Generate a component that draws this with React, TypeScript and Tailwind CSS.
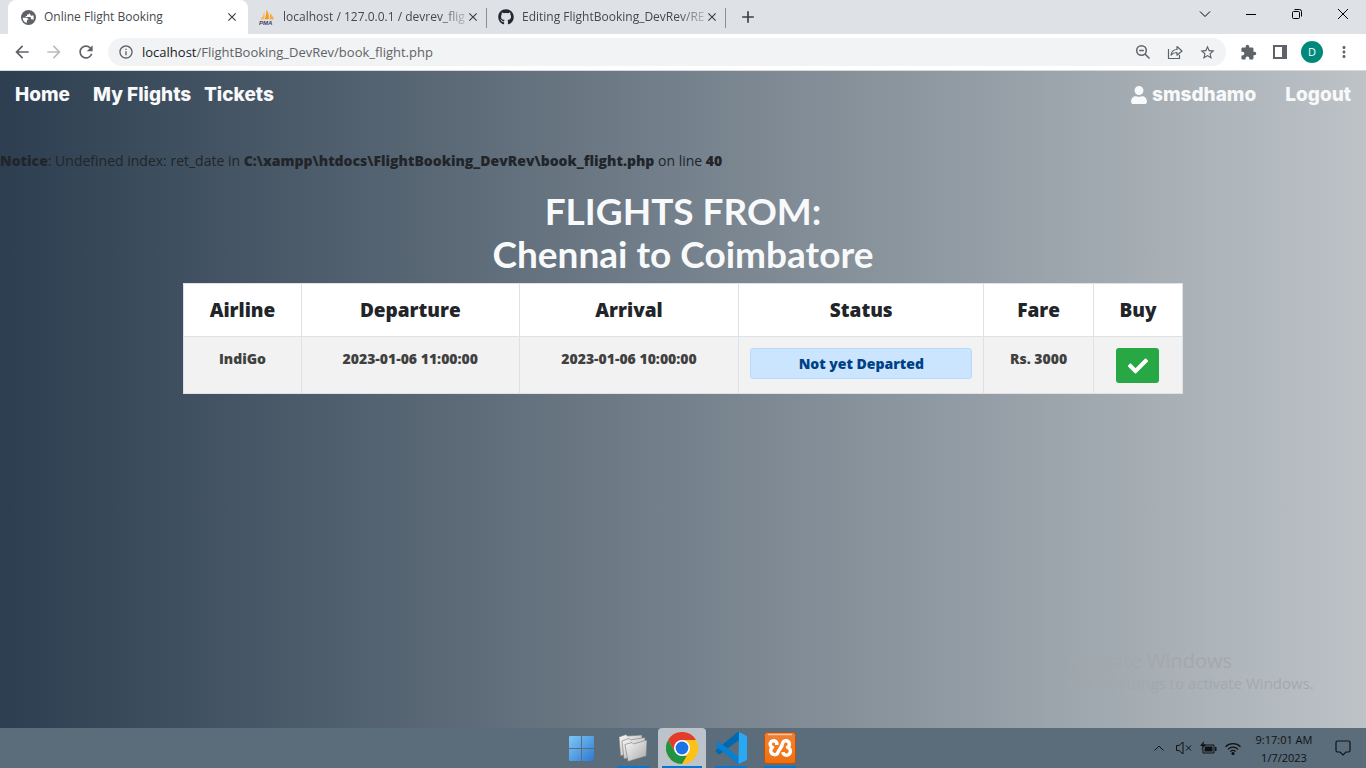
import React from "react";
import { FaCheck, FaGithub, FaUser } from "react-icons/fa";
import { MdArrowBack, MdArrowForward, MdClose, MdAdd, MdExtension, MdMoreVert, MdOutlineInfo, MdRefresh, MdStarBorder } from "react-icons/md";

const sans = "font-['Open_Sans','Noto_Sans',sans-serif]";

function PmaIcon() {
  return (
    <svg width="16" height="16" viewBox="0 0 16 16" aria-hidden="true">
      <path d="M1.2 10.5C3 9 4.6 6 5.2 2.6c.6 2.6.5 5.400-.2 7.600z" fill="#fbb468" />
      <path d="M5.400 10.300C7 7.500 7.600 4 7.400.8c2 2.600 2.800 6 2.400 9.400z" fill="#f89c0e" />
      <path d="M10.400 10.200c.8-2.200.8-4.400.2-6.200 2 1.600 3.600 3.800 4.400 6.400z" fill="#f9a94a" />
      <text x="0" y="15.600" fontSize="6" fontWeight="700" fontStyle="italic" fontFamily="Liberation Sans, sans-serif" fill="#3d3e63">PMA</text>
    </svg>
  );
}

function GlobeIcon() {
  return (
    <svg width="15" height="15" viewBox="0 0 16 16" aria-hidden="true">
      <circle cx="8" cy="8" r="8" fill="#5f6368" />
      <path d="M1.800 8.300h3.700c1.600 0 2.400.8 2.400 2.200H6.400v1.700c0 .6-.3 1.200-.9 1.600C3.300 12.900 1.800 10.800 1.800 8.300zM9.200 2v1.300c0 1-.7 1.500-1.600 1.500H6.400v1.500H5v1.200h4.200c.9 0 1.400.5 1.400 1.400v1h1.300c.7 0 1.200.4 1.400.9a6.300 6.300 0 0 0-.4-5.400c-.6.7-1.500.9-2.300.4-.8-.6-1.600-2.300-1.400-3.800z" fill="#fff" />
    </svg>
  );
}

function Tab({ title, icon, active = false }: { title: string; icon: React.ReactNode; active?: boolean }) {
  return (
    <div className={active
      ? "relative flex w-[240px] items-center rounded-t-lg bg-white pr-2 pl-3"
      : "relative flex w-[239px] items-center pr-2 pl-[11px]"}>
      <span className="flex w-4 shrink-0 justify-center">{icon}</span>
      <span className={active
        ? "ml-2 flex-1 text-xs whitespace-nowrap text-[#45494d]"
        : "ml-2 flex-1 [mask-image:linear-gradient(to_right,#000_86%,rgb(0_0_0/0.25))] text-xs whitespace-nowrap text-[#45494d]"}>{title}</span>
      <button aria-label={"Close " + title} className="flex size-4 shrink-0 items-center justify-center text-[#3c4043]"><MdClose size={14} /></button>
      {!active && <span className="absolute top-2 right-0 h-5 w-px bg-[#8b8e92]" />}
    </div>
  );
}

function Browser() {
  return (
    <header className="border-b border-[#d5d8dc]">
      <div className="flex h-[34px] items-stretch bg-[#dee1e6] pl-2">
        <Tab active title="Online Flight Booking" icon={<GlobeIcon />} />
        <Tab title="localhost / 127.0.0.1 / devrev_flig" icon={<PmaIcon />} />
        <Tab title="Editing FlightBooking_DevRev/RE" icon={<FaGithub size={16} className="text-[#24292f]" />} />
        <button aria-label="New tab" className="px-3 text-[#3c4043]"><MdAdd size={20} /></button>
        <div className="ml-auto flex text-black">
          <button aria-label="Search tabs" className="flex h-7 w-[46px] items-center justify-center">
            <svg width="12" height="12" viewBox="0 0 12 12" fill="none" stroke="currentColor"><path d="M1 3.500 6 8.500l5-5" /></svg>
          </button>
          <button aria-label="Minimize" className="flex h-7 w-[46px] items-center justify-center">
            <svg width="12" height="12" viewBox="0 0 12 12" fill="none" stroke="currentColor"><path d="M1 6.500h10" /></svg>
          </button>
          <button aria-label="Restore" className="flex h-7 w-[46px] items-center justify-center">
            <svg width="12" height="12" viewBox="0 0 12 12" fill="none" stroke="currentColor"><rect x="1.500" y="3.500" width="7" height="7" rx="1" /><path d="M3.500 1.500h5a2 2 0 0 1 2 2v5" /></svg>
          </button>
          <button aria-label="Close window" className="flex h-7 w-[46px] items-center justify-center">
            <svg width="12" height="12" viewBox="0 0 12 12" fill="none" stroke="currentColor"><path d="m1 1 10 10M11 1 1 11" /></svg>
          </button>
        </div>
      </div>
      <div className="flex h-9 items-center bg-white pr-[6px] pl-3 text-[#5f6368]">
        <button aria-label="Back" className="w-8"><MdArrowBack size={20} /></button>
        <button aria-label="Forward" className="w-8 text-[#babcbe]"><MdArrowForward size={20} /></button>
        <button aria-label="Reload" className="w-8"><MdRefresh size={20} /></button>
        <div className="flex h-7 flex-1 items-center rounded-full bg-[#f1f3f4] pr-[10px] pl-[10px]">
          <MdOutlineInfo size={16} className="shrink-0" />
          <a href="#" className="ml-2 flex-1 pt-px text-[13px] text-[#5f6368]"><span className="text-[#202124]">localhost</span>/FlightBooking_DevRev/book_flight.php</a>
          <div className="flex items-center gap-4">
            <button aria-label="Zoom">
              <svg width="16" height="16" viewBox="0 0 16 16" fill="none" stroke="currentColor" strokeWidth="1.500"><circle cx="6.500" cy="6.500" r="4.800" /><path d="m10 10 4.500 4.500M4.200 6.500h4.600" /></svg>
            </button>
            <button aria-label="Share">
              <svg width="16" height="16" viewBox="0 0 16 16" fill="none" stroke="currentColor" strokeWidth="1.200" strokeLinejoin="round"><path d="M1.500 5v9.500h11V11M4 11c.6-3.600 2.800-5.400 6-5.500V2.500l5 4.500-5 4.200V8.500C7.400 8.500 5.600 9.200 4 11z" /></svg>
            </button>
            <button aria-label="Bookmark"><MdStarBorder size={17} /></button>
          </div>
        </div>
        <div className="flex items-center">
          <button aria-label="Extensions" className="flex w-[38px] justify-center pl-[6px]"><MdExtension size={17} /></button>
          <button aria-label="Side panel" className="flex w-8 justify-center">
            <svg width="14" height="14" viewBox="0 0 14 14"><path fill="currentColor" fillRule="evenodd" d="M0 0h14v14H0zM2 2h7v10H2z" /></svg>
          </button>
          <button aria-label="Profile" className="mx-[5px] size-[22px] rounded-full bg-[#00897b] text-[11px] text-white">D</button>
          <button aria-label="Menu" className="flex w-8 justify-center"><MdMoreVert size={18} /></button>
        </div>
      </div>
    </header>
  );
}

function Chrome() {
  return (
    <svg width="32" height="32" viewBox="-16 -16 32 32" aria-hidden="true">
      <circle r="16" fill="#fbc116" />
      <path d="M0-8H13.900A16 16 0 0 0-13.860-8L-6.900 4Z" fill="#e33b2e" />
      <path d="M-13.860-8-6.930 4 0 8h6.930L0 16A16 16 0 0 1-13.860-8Z" fill="#229342" />
      <path d="M6.930 4 0 16A16 16 0 0 0 13.860-8H0Z" fill="#fbc116" />
      <circle r="8" fill="#fff" />
      <circle r="6.400" fill="#1a73e8" />
    </svg>
  );
}

function Taskbar() {
  return (
    <footer className="flex h-10 shrink-0 items-center bg-[#5b6c7a] pr-[15px]">
      <div className="flex-1" />
      <div className="flex h-full gap-px pl-[10px]">
        <button aria-label="Start" className="flex w-12 items-center justify-center">
          <svg width="25" height="25" viewBox="0 0 25 25">
            <defs><linearGradient id="win" x2="1" y2="1"><stop stopColor="#7cc8f7" /><stop offset="1" stopColor="#2f78d0" /></linearGradient></defs>
            <path fill="url(#win)" d="M1 0h11v12H0V1a1 1 0 0 1 1-1zM13 0h11a1 1 0 0 1 1 1v11H13zM0 13h12v12H1a1 1 0 0 1-1-1zM13 13h12v11a1 1 0 0 1-1 1H13z" />
          </svg>
        </button>
        <button aria-label="Files" className="relative ml-[3px] flex w-12 items-center justify-center">
          <svg width="28" height="28" viewBox="0 0 28 28">
            <defs><linearGradient id="fold" x2="1" y2="1"><stop stopColor="#fafafa" /><stop offset="1" stopColor="#a8a8a8" /></linearGradient></defs>
            <g fill="url(#fold)" stroke="#777" strokeWidth=".6" strokeLinejoin="round">
              <path d="M0 3 7 .5l1.500 1.600L23 1v15L1.500 22z" />
              <path d="m3 7 7-2.500L11.500 6 26 3.500v16L5 25z" />
              <path d="m6 10.500 7-2L14.500 10 28 6l-.8 16L9 27.500z" />
            </g>
          </svg>
          <span className="absolute bottom-0 h-0.5 w-8 bg-[#0078d4]" />
        </button>
        <button aria-label="Google Chrome" className="relative flex w-12 items-center justify-center rounded-t-sm bg-[#bcc3ca]">
          <Chrome /><span className="absolute bottom-0 h-0.5 w-10 bg-[#0078d4]" />
        </button>
        <button aria-label="Visual Studio Code" className="relative flex w-12 items-center justify-center">
          <svg width="32" height="32" viewBox="0 0 32 32">
            <path d="M24 0v8L5 21.900a1.400 1.400 0 0 1-1.800 0L1 19.900a1.400 1.400 0 0 1 0-2L21.500.9A3.500 3.500 0 0 1 24 0z" fill="#0069b0" />
            <path d="M.9 12.400 3.200 10.700a1.400 1.400 0 0 1 1.800 0L24 25v7a3.500 3.500 0 0 1-2.500-1L1 14.300a1.400 1.400 0 0 1-.1-1.900z" fill="#0a7fcf" />
            <path d="M24 0 31 3.500a2 2 0 0 1 1 1.800v21.400a2 2 0 0 1-1 1.800L23.500 32z" fill="#29a8f3" />
          </svg>
          <span className="absolute bottom-0 h-0.5 w-8 bg-[#0078d4]" />
        </button>
        <button aria-label="XAMPP" className="relative flex w-12 items-center justify-center">
          <svg width="32" height="32" viewBox="0 0 32 32">
            <defs><linearGradient id="xa" x2="0" y2="1"><stop stopColor="#e8803f" /><stop offset=".4" stopColor="#f47c20" /><stop offset="1" stopColor="#ee6f12" /></linearGradient></defs>
            <rect x=".5" y=".5" width="31" height="31" rx="2.500" fill="url(#xa)" stroke="#b95410" />
            <path d="M4 2.500h24" stroke="#f4c3a0" strokeWidth="1.500" />
            <path d="M12.800 13V11A3.400 3.400 0 1 0 8.500 15.300A4 4 0 1 0 13.500 21.500C14 18 18 16 18.500 11.500A3.500 3.500 0 1 1 23.500 15.300A4 4 0 1 1 19.200 21.500V20" fill="none" stroke="#fff" strokeWidth="3.500" strokeLinejoin="round" />
          </svg>
          <span className="absolute bottom-0 h-0.5 w-8 bg-[#0078d4]" />
        </button>
      </div>
      <div className="flex flex-1 items-center justify-end text-[#101214]">
        <svg width="10" height="6" viewBox="0 0 10 6" fill="none" stroke="currentColor"><path d="m.5 5.500 4.500-4.500 4.500 4.500" /></svg>
        <svg className="ml-3" width="16" height="14" viewBox="0 0 16 14" fill="none" stroke="currentColor"><path d="M.5 4.500H3l4-3.500v12L3 9.500H.5zM10 4.500l5 5M15 4.500l-5 5" /></svg>
        <svg className="ml-2" width="17" height="14" viewBox="0 0 17 14"><path d="M4 4h10v8H3V8" fill="none" stroke="currentColor" /><path fill="currentColor" d="M5 5.500h7.500v5H4.500V8zM15 6h1.500v4H15zM4 0 0 5h2.500L1.500 9 6 3.500H3.500z" /></svg>
        <svg className="ml-2" width="16" height="13" viewBox="0 0 16 13" fill="none" stroke="currentColor" strokeWidth="1.200"><path d="M.5 4.800a10.500 10.500 0 0 1 15 0M3 7.300a7 7 0 0 1 10 0M5.300 9.600a3.900 3.900 0 0 1 5.400 0" /><circle cx="8" cy="11.500" r="1" fill="currentColor" /></svg>
        <div className="ml-3 w-[62px] pt-px text-center text-[11px] leading-[18px]"><div>9:17:01 AM</div><div>1/7/2023</div></div>
        <svg className="ml-5" width="16" height="16" viewBox="0 0 16 16" fill="none" stroke="currentColor" strokeWidth="1.200"><path d="M2.500 1h11A1.500 1.500 0 0 1 15 2.500v8a1.500 1.500 0 0 1-1.500 1.500H11l-3 3-3-3H2.500A1.500 1.500 0 0 1 1 10.500v-8A1.500 1.500 0 0 1 2.500 1z" /></svg>
      </div>
    </footer>
  );
}

const th = "border border-[#dee2e6] text-[19px] font-extrabold text-[#212529]";
const td = "border border-[#dee2e6] px-[11px] pt-[11px] align-top text-[14px] leading-[22px] font-extrabold text-[#404040]";

export default function App() {
  return (
    <div className={"flex min-h-screen flex-col " + sans}>
      <Browser />
      <main className="relative flex-1 bg-linear-to-r from-[#2c3e50] to-[#bdc3c7] [--tw-gradient-position:to_right]">
        <nav className="flex h-12 items-center px-[15px] font-['Inter',sans-serif] text-[19px] font-extrabold text-[#f8f9fa]">
          <a href="#" className="w-[78px]">Home</a>
          <a href="#" className="w-[111px]">My Flights</a>
          <a href="#">Tickets</a>
          <a href="#" className="ml-auto flex items-center gap-1"><FaUser size={18} />smsdhamo</a>
          <a href="#" className="ml-[29px]">Logout</a>
        </nav>
        <p className="mt-8 text-[14px] leading-5 text-[#212529]"><b className="font-extrabold">Notice</b>: Undefined index: ret_date in <b className="font-extrabold">C:\xampp\htdocs\FlightBooking_DevRev\book_flight.php</b> on line <b className="font-extrabold">40</b></p>
        <h1 className="mt-[18px] text-center font-['Lato',sans-serif] text-[37px] leading-[43px] font-bold text-[#f8f9fa]">FLIGHTS FROM:<br />Chennai to Coimbatore</h1>
        <table className="mx-auto mt-2 w-[73.2%] table-fixed border-collapse bg-white text-center">
          <colgroup><col className="w-[11.8%]" /><col className="w-[21.8%]" /><col className="w-[22%]" /><col className="w-[24.5%]" /><col className="w-[11%]" /><col className="w-[8.9%]" /></colgroup>
          <thead>
            <tr className="h-[53px]">
              <th className={th}>Airline</th><th className={th}>Departure</th><th className={th}>Arrival</th>
              <th className={th}>Status</th><th className={th}>Fare</th><th className={th}>Buy</th>
            </tr>
          </thead>
          <tbody>
            <tr className="h-[57px] bg-[#f2f2f2]">
              <td className={td}>IndiGo</td>
              <td className={td}>2023-01-06 11:00:00</td>
              <td className={td}>2023-01-06 10:00:00</td>
              <td className={td}><div className="h-[31px] rounded-[3px] border border-[#b8daff] bg-[#cce5ff] leading-[30px] text-[#004085]">Not yet Departed</div></td>
              <td className={td}>Rs. 3000</td>
              <td className={td}><button aria-label="Buy" className="inline-flex h-[35px] w-[43px] items-center justify-center rounded-[3px] bg-[#28a745] text-white"><FaCheck size={20} /></button></td>
            </tr>
          </tbody>
        </table>
        <div className="absolute right-[55px] bottom-[35px] w-[243px] text-[#a3a8ac]">
          <div className="text-xl leading-6">Activate Windows</div>
          <div className="text-[15px] leading-5 whitespace-nowrap">Go to Settings to activate Windows.</div>
        </div>
      </main>
      <Taskbar />
    </div>
  );
}
